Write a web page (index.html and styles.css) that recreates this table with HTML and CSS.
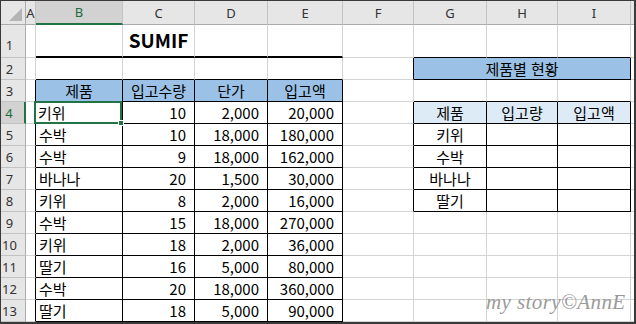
FILE: index.html
```html
<!DOCTYPE html>
<html lang="ko">
<head>
<meta charset="utf-8">
<title>SUMIF</title>
<link rel="stylesheet" href="styles.css">
</head>
<body>
<div class="frame">
  <div class="sheet">
    <!-- column headers -->
    <div class="corner"><svg width="24" height="23" viewBox="0 0 24 23"><polygon points="21,7 21,20 8,20" fill="#b4b4b4"/></svg></div>
    <div class="ch">A</div>
    <div class="ch sel">B</div>
    <div class="ch">C</div>
    <div class="ch">D</div>
    <div class="ch">E</div>
    <div class="ch">F</div>
    <div class="ch">G</div>
    <div class="ch">H</div>
    <div class="ch">I</div>
    <div class="ch last"></div>

    <!-- row 1 -->
    <div class="rh r1">1</div>
    <div class="c"></div>
    <div class="c thick"></div>
    <div class="c thick title">SUMIF</div>
    <div class="c thick"></div>
    <div class="c thick"></div>
    <div class="c"></div>
    <div class="c bb"></div>
    <div class="c bb"></div>
    <div class="c bb"></div>
    <div class="c x"></div>

    <!-- row 2 -->
    <div class="rh">2</div>
    <div class="c"></div>
    <div class="c bb"></div>
    <div class="c bb"></div>
    <div class="c bb"></div>
    <div class="c bb"></div>
    <div class="c br"></div>
    <div class="c br bb hd span3">제품별 현황</div>
    <div class="c x"></div>

    <!-- row 3 -->
    <div class="rh">3</div>
    <div class="c br"></div>
    <div class="c br bb hd">제품</div>
    <div class="c br bb hd">입고수량</div>
    <div class="c br bb hd">단가</div>
    <div class="c br bb hd">입고액</div>
    <div class="c"></div>
    <div class="c bb"></div>
    <div class="c bb"></div>
    <div class="c bb"></div>
    <div class="c x"></div>

    <!-- row 4 -->
    <div class="rh sel">4</div>
    <div class="c br"></div>
    <div class="c br bb active">키위<span class="selbox"><span class="handle"></span></span></div>
    <div class="c br bb num">10</div>
    <div class="c br bb num">2,000</div>
    <div class="c br bb num">20,000</div>
    <div class="c br"></div>
    <div class="c br bb lt">제품</div>
    <div class="c br bb lt">입고량</div>
    <div class="c br bb lt">입고액</div>
    <div class="c x"></div>

    <!-- row 5 -->
    <div class="rh">5</div>
    <div class="c br"></div>
    <div class="c br bb">수박</div>
    <div class="c br bb num">10</div>
    <div class="c br bb num">18,000</div>
    <div class="c br bb num">180,000</div>
    <div class="c br"></div>
    <div class="c br bb ctr">키위</div>
    <div class="c br bb"></div>
    <div class="c br bb"></div>
    <div class="c x"></div>

    <!-- row 6 -->
    <div class="rh">6</div>
    <div class="c br"></div>
    <div class="c br bb">수박</div>
    <div class="c br bb num">9</div>
    <div class="c br bb num">18,000</div>
    <div class="c br bb num">162,000</div>
    <div class="c br"></div>
    <div class="c br bb ctr">수박</div>
    <div class="c br bb"></div>
    <div class="c br bb"></div>
    <div class="c x"></div>

    <!-- row 7 -->
    <div class="rh">7</div>
    <div class="c br"></div>
    <div class="c br bb">바나나</div>
    <div class="c br bb num">20</div>
    <div class="c br bb num">1,500</div>
    <div class="c br bb num">30,000</div>
    <div class="c br"></div>
    <div class="c br bb ctr">바나나</div>
    <div class="c br bb"></div>
    <div class="c br bb"></div>
    <div class="c x"></div>

    <!-- row 8 -->
    <div class="rh">8</div>
    <div class="c br"></div>
    <div class="c br bb">키위</div>
    <div class="c br bb num">8</div>
    <div class="c br bb num">2,000</div>
    <div class="c br bb num">16,000</div>
    <div class="c br"></div>
    <div class="c br bb ctr">딸기</div>
    <div class="c br bb"></div>
    <div class="c br bb"></div>
    <div class="c x"></div>

    <!-- row 9 -->
    <div class="rh">9</div>
    <div class="c br"></div>
    <div class="c br bb">수박</div>
    <div class="c br bb num">15</div>
    <div class="c br bb num">18,000</div>
    <div class="c br bb num">270,000</div>
    <div class="c"></div>
    <div class="c"></div>
    <div class="c"></div>
    <div class="c"></div>
    <div class="c x"></div>

    <!-- row 10 -->
    <div class="rh">10</div>
    <div class="c br"></div>
    <div class="c br bb">키위</div>
    <div class="c br bb num">18</div>
    <div class="c br bb num">2,000</div>
    <div class="c br bb num">36,000</div>
    <div class="c"></div>
    <div class="c"></div>
    <div class="c"></div>
    <div class="c"></div>
    <div class="c x"></div>

    <!-- row 11 -->
    <div class="rh">11</div>
    <div class="c br"></div>
    <div class="c br bb">딸기</div>
    <div class="c br bb num">16</div>
    <div class="c br bb num">5,000</div>
    <div class="c br bb num">80,000</div>
    <div class="c"></div>
    <div class="c"></div>
    <div class="c"></div>
    <div class="c"></div>
    <div class="c x"></div>

    <!-- row 12 -->
    <div class="rh">12</div>
    <div class="c br"></div>
    <div class="c br bb">수박</div>
    <div class="c br bb num">20</div>
    <div class="c br bb num">18,000</div>
    <div class="c br bb num">360,000</div>
    <div class="c"></div>
    <div class="c"></div>
    <div class="c"></div>
    <div class="c"></div>
    <div class="c x"></div>

    <!-- row 13 -->
    <div class="rh">13</div>
    <div class="c br"></div>
    <div class="c br bb">딸기</div>
    <div class="c br bb num">18</div>
    <div class="c br bb num">5,000</div>
    <div class="c br bb num">90,000</div>
    <div class="c"></div>
    <div class="c"></div>
    <div class="c"></div>
    <div class="c"></div>
    <div class="c x"></div>

    <div class="watermark">my story©AnnE</div>
  </div>
</div>
</body>
</html>
```

FILE: styles.css
```css
* { box-sizing: border-box; }

html, body {
  margin: 0;
  padding: 0;
  background: #ffffff;
}

.frame {
  width: 636px;
  height: 324px;
  border-top: 1px solid #3a3a3a;
  border-left: 1px solid #3a3a3a;
  border-right: 2px solid #3a3a3a;
  border-bottom: 2px solid #3a3a3a;
  overflow: hidden;
  background: #ffffff;
}

.sheet {
  position: relative;
  display: grid;
  grid-template-columns: 25px 10px 87px 72px 73px 75px 71px 73px 71px 73px 1fr;
  grid-template-rows: 24px 33px repeat(12, 22px);
  font-family: "Noto Sans CJK KR", "Noto Sans", sans-serif;
  font-size: 15px;
  color: #000000;
}

.corner {
  background: #e6e6e6;
  border-right: 1px solid #ababab;
  border-bottom: 1px solid #ababab;
}
.corner svg { display: block; }

.ch {
  background: #e6e6e6;
  border-right: 1px solid #c3c3c3;
  border-bottom: 1px solid #ababab;
  display: flex;
  align-items: center;
  justify-content: center;
  font-family: "Noto Sans", "DejaVu Sans", sans-serif;
  font-size: 13px;
  color: #333333;
  overflow: visible;
  white-space: nowrap;
}
.ch.sel {
  background: #d2d2d2;
  border-bottom: 2px solid #217346;
  color: #1e6b41;
}
.ch.last { border-right: none; }

.rh {
  background: #e6e6e6;
  border-right: 1px solid #ababab;
  border-bottom: 1px solid #c3c3c3;
  display: flex;
  align-items: center;
  justify-content: center;
  padding-right: 7px;
  font-family: "Noto Sans", "DejaVu Sans", sans-serif;
  font-size: 13px;
  color: #333333;
}
.rh.r1 {
  align-items: flex-end;
  padding-bottom: 3px;
}
.rh.sel {
  background: #d2d2d2;
  border-right: 2px solid #217346;
  color: #1e6b41;
}

.c {
  position: relative;
  border-right: 1px solid #d4d4d4;
  border-bottom: 1px solid #d4d4d4;
  display: flex;
  align-items: center;
  padding: 0 3px;
  line-height: 18px;
  white-space: nowrap;
}
.c.x { border-right: none; }
.c.br { border-right-color: #000000; }
.c.bb { border-bottom-color: #000000; }
.c.thick { border-bottom: 2px solid #000000; }

.title {
  justify-content: center;
  align-items: flex-end;
  padding-bottom: 5px;
  font-weight: 700;
  font-size: 19px;
  line-height: 22px;
}

.hd {
  background: #9bc2e6;
  justify-content: center;
}
.lt {
  background: #ddebf7;
  justify-content: center;
}
.ctr { justify-content: center; }
.num {
  justify-content: flex-end;
  padding-right: 8px;
}
.span3 { grid-column: span 3; }

.active {
  padding-left: 2px;
  z-index: 2;
}
.selbox {
  position: absolute;
  left: -2px;
  top: -1px;
  right: 0;
  bottom: -1px;
  border: 2px solid #217346;
  pointer-events: none;
}
.handle {
  position: absolute;
  right: -4px;
  bottom: -4px;
  width: 6px;
  height: 6px;
  background: #217346;
  border: 1px solid #ffffff;
}

.watermark {
  position: absolute;
  left: 485px;
  top: 289px;
  z-index: 3;
  font-family: "Liberation Serif", "DejaVu Serif", serif;
  font-style: italic;
  font-size: 21px;
  letter-spacing: 0.4px;
  color: #9a9a9a;
  white-space: nowrap;
}
```
